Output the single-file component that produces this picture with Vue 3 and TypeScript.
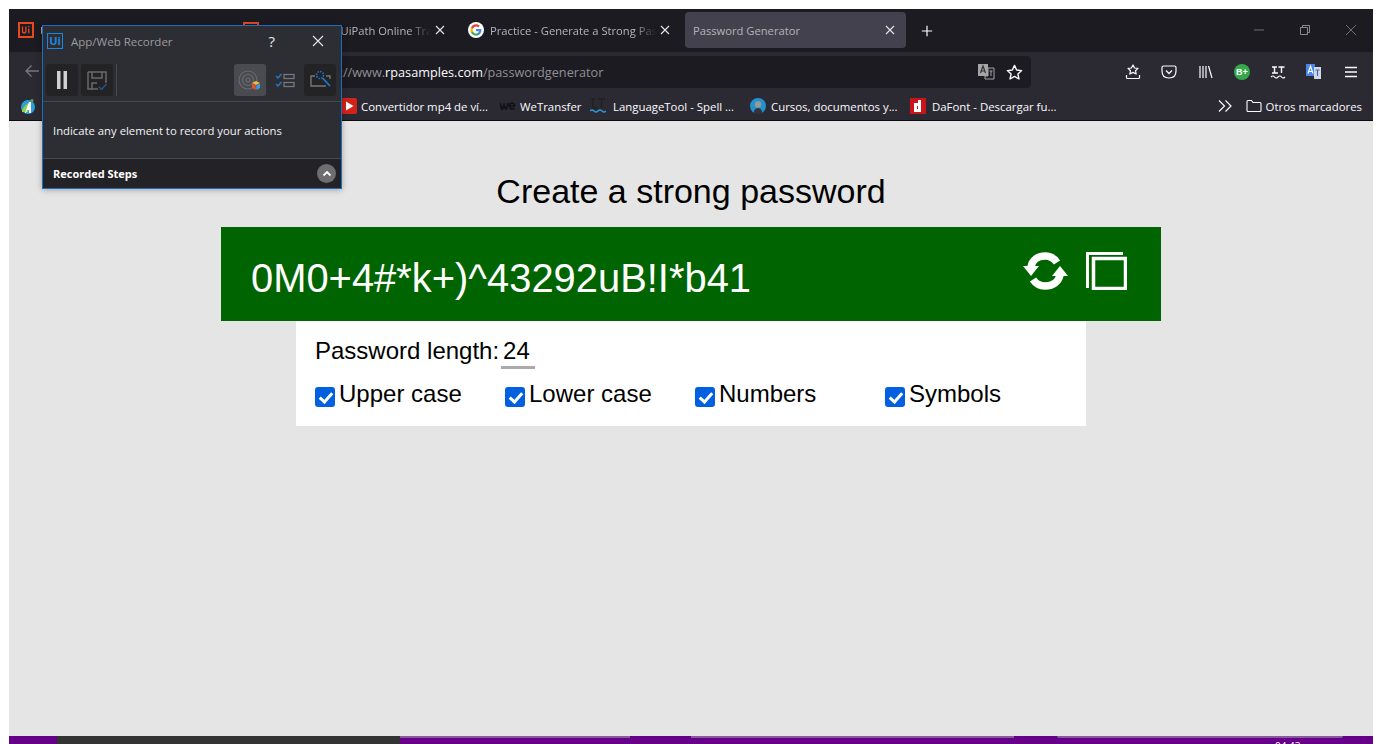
<template>
  <div class="screen">
    <div class="browser">
      <div class="tabbar">
        <div
          v-for="tab in tabs"
          :key="tab.title"
          class="tab"
          :class="{ active: tab.active }"
        >
          <svg v-if="tab.icon === 'ui'" class="tab-icon" viewBox="0 0 16 16">
            <rect x="1" y="1" width="14" height="14" fill="none" stroke="#e8481e" stroke-width="2" />
            <path d="M4.500 4.500v4.500q0 2 1.700 2t1.700-2v-4.500M10.800 6.500v4.800M10.800 4v1.300" fill="none" stroke="#e8481e" stroke-width="1.300" />
          </svg>
          <svg v-else-if="tab.icon === 'g'" class="tab-icon" viewBox="0 0 48 48">
            <circle cx="24" cy="24" r="24" fill="#fff" />
            <path fill="#4285f4" d="M40 24.500c0-1.200-.1-2.300-.3-3.400H24v6.500h9c-.4 2.100-1.600 3.900-3.400 5.100v4.200h5.400c3.200-2.900 5-7.200 5-12.400z" />
            <path fill="#34a853" d="M24 41c4.500 0 8.300-1.500 11-4.100l-5.400-4.200c-1.500 1-3.400 1.600-5.600 1.600-4.300 0-8-2.900-9.300-6.900H9.100v4.300C11.900 37.200 17.500 41 24 41z" />
            <path fill="#fbbc05" d="M14.700 27.400c-.7-2-.7-4.800 0-6.800v-4.300H9.100c-2.800 4.800-2.800 10.600 0 15.400z" />
            <path fill="#ea4335" d="M24 13.700c2.400 0 4.600.8 6.300 2.500l4.800-4.800C32.300 8.700 28.500 7 24 7c-6.500 0-12.100 3.800-14.900 9.300l5.600 4.300c1.300-4 5-6.900 9.300-6.900z" />
          </svg>
          <span class="tab-title">{{ tab.title }}</span>
          <svg class="tab-close" viewBox="0 0 10 10">
            <path d="M1 1l8 8M9 1l-8 8" stroke="#e6e6e8" stroke-width="1.100" />
          </svg>
        </div>
        <svg class="new-tab" viewBox="0 0 14 14">
          <path d="M7 1v12M1 7h12" stroke="#fbfbfe" stroke-width="1.400" />
        </svg>
        <div class="window-controls">
          <svg viewBox="0 0 12 12"><path d="M1 6h10" stroke="#6f6f74" /></svg>
          <svg viewBox="0 0 12 12">
            <path d="M1.500 3.500h7v7h-7zM3.500 3.500v-2h7v7h-2" fill="none" stroke="#8a8a8e" />
          </svg>
          <svg viewBox="0 0 12 12"><path d="M1 1l10 10M11 1l-10 10" stroke="#6f6f74" /></svg>
        </div>
      </div>

      <div class="toolbar">
        <svg class="back" viewBox="0 0 16 16">
          <path d="M15 8H2M7.500 2.500L2 8l5.500 5.500" fill="none" stroke="#77767d" stroke-width="1.300" />
        </svg>
        <div class="urlbar">
          <span class="url">https://www.<b>rpasamples.com</b>/passwordgenerator</span>
          <svg class="url-translate" viewBox="0 0 18 18">
            <rect x="1" y="1" width="10" height="12" fill="#a5a5a8" />
            <path d="M3.500 10l2.500-7 2.500 7M4.300 8h3.400" fill="none" stroke="#333" stroke-width="1.200" />
            <path d="M11 5h6v11H8v-3h3z" fill="none" stroke="#a5a5a8" />
            <path d="M12.500 8h3M14 8v5" stroke="#a5a5a8" />
          </svg>
          <svg class="url-star" viewBox="0 0 16 16">
            <path d="M8 1.300l2 4.400 4.700.5-3.500 3.200 1 4.700L8 11.700l-4.200 2.400 1-4.700L1.300 6.200 6 5.700z" fill="none" stroke="#fbfbfe" stroke-width="1.300" stroke-linejoin="round" />
          </svg>
        </div>
        <div class="tool-icons">
          <svg viewBox="0 0 16 16">
            <path d="M8 1l1.600 3 3.400.4-2.500 2.300.7 3.300L8 8.400 4.800 10l.7-3.300L3 4.400 6.400 4zM1.500 11v2.500q0 1 1 1h11q1 0 1-1V11" fill="none" stroke="#fbfbfe" stroke-width="1.200" stroke-linejoin="round" />
          </svg>
          <svg viewBox="0 0 16 16">
            <path d="M2.500 2h11Q15 2 15 3.500V7q0 7-7 7T1 7V3.500Q1 2 2.500 2z" fill="none" stroke="#fbfbfe" stroke-width="1.200" />
            <path d="M5 6.500l3 3 3-3" fill="none" stroke="#fbfbfe" stroke-width="1.300" />
          </svg>
          <svg viewBox="0 0 16 16">
            <path d="M2 2v12M5 2v12M8 2v12M10.500 2l3.500 12" fill="none" stroke="#fbfbfe" stroke-width="1.200" />
          </svg>
          <svg viewBox="0 0 16 16">
            <circle cx="8" cy="8" r="8" fill="#34a84a" />
            <text x="8" y="11.200" class="badge-text" text-anchor="middle">B+</text>
          </svg>
          <svg viewBox="0 0 16 16">
            <path d="M2 3h5M4.500 3v6M2 9h6M8.500 3h6M11.500 3v6" fill="none" stroke="#fbfbfe" stroke-width="1.400" />
            <path d="M1 13q2-2 3.500 0t3.500 0 3.500 0 3.500 0" fill="none" stroke="#fbfbfe" stroke-width="1.200" />
          </svg>
          <svg viewBox="0 0 16 16">
            <rect x="0" y="0" width="9" height="12" fill="#4a86e8" />
            <path d="M2 9.500L4.500 2 7 9.500M3 7.500h3" fill="none" stroke="#fff" stroke-width="1.100" />
            <rect x="8" y="3" width="7" height="12" fill="#cfd8e6" />
            <path d="M9.500 6h4M11.500 6v6" stroke="#3a66b0" stroke-width="1.100" />
          </svg>
          <svg viewBox="0 0 16 16">
            <path d="M2 3.500h12M2 8h12M2 12.500h12" stroke="#fbfbfe" stroke-width="1.300" />
          </svg>
        </div>
      </div>

      <div class="bookmarks">
        <svg class="bm-first" viewBox="0 0 16 16">
          <circle cx="8" cy="9" r="7" fill="#2a9fd8" />
          <path d="M2 12q3-6 8-7l-2 9H2z" fill="#8fd14f" />
          <path d="M5 15L9 4h2v11H9v-3H7l-1 3z" fill="#fff" />
          <circle cx="12" cy="2.500" r="1.500" fill="#5aa83c" />
        </svg>
        <div
          v-for="mark in bookmarks"
          :key="mark.title"
          class="bookmark"
          :style="{ width: mark.width + 'px', gap: mark.gap + 'px' }"
        >
          <svg v-if="mark.icon === 'yt'" viewBox="0 0 16 16">
            <rect width="16" height="16" rx="2" fill="#d3221a" />
            <path d="M5 3.500l7.500 4.500L5 12.500z" fill="#fff" />
          </svg>
          <svg v-else-if="mark.icon === 'we'" viewBox="0 0 16 16">
            <path d="M0 5l1.500 6h1L4 7l1.500 4h1L8 5M9.500 8h5q0-3-2.500-3T9.500 8q0 3 2.500 3 1.500 0 2.500-1" fill="none" stroke="#111114" stroke-width="1.700" />
          </svg>
          <svg v-else-if="mark.icon === 'lt'" viewBox="0 0 16 16">
            <path d="M1 1h4M3 1v9H7M8 1h7M11.500 1v9" fill="none" stroke="#202024" stroke-width="1.500" />
            <path d="M0 13q2-2 4 0t4 0 4 0 4 0" fill="none" stroke="#2b9ad6" stroke-width="1.400" />
          </svg>
          <svg v-else-if="mark.icon === 'av'" viewBox="0 0 16 16">
            <circle cx="8" cy="8" r="8" fill="#2292d0" />
            <circle cx="8" cy="6.500" r="3.200" fill="#9a9a92" />
            <path d="M3.500 16q.5-6 4.500-6t4.500 6z" fill="#30333a" />
          </svg>
          <svg v-else viewBox="0 0 16 16">
            <rect width="16" height="16" fill="#c8141a" />
            <path d="M4 5h4V2h3v12H4zM7 8v3h1V8z" fill="#fff" />
          </svg>
          <span>{{ mark.title }}</span>
        </div>
        <div class="bm-right">
          <svg class="chevrons" viewBox="0 0 14 12">
            <path d="M1 .5l5.500 5.500L1 11.500M7.500 .5L13 6l-5.500 5.500" fill="none" stroke="#fbfbfe" stroke-width="1.200" />
          </svg>
          <div class="bookmark other">
            <svg viewBox="0 0 16 16">
              <path d="M1 3.500q0-1 1-1h3.500l1.500 2h7q1 0 1 1v7q0 1-1 1H2q-1 0-1-1z" fill="none" stroke="#fbfbfe" stroke-width="1.100" />
            </svg>
            <span>Otros marcadores</span>
          </div>
        </div>
      </div>

      <main class="page">
        <h1>Create a strong password</h1>
        <section class="result">
          <span class="password">{{ password }}</span>
          <div class="result-actions">
            <svg class="sync" viewBox="0 0 44 38">
              <path d="M8 15C9 8 15 4 22 4c5 0 9 2 12 6.500" fill="none" stroke="#fff" stroke-width="7.500" />
              <path d="M0 14h16l-8 10z" fill="#fff" />
              <path d="M37 23C35.500 30 29.500 34 22 34c-5 0-9-2-12-6.500" fill="none" stroke="#fff" stroke-width="7.500" />
              <path d="M45 24H29l8-10z" fill="#fff" />
            </svg>
            <svg class="copy" viewBox="0 0 41 38">
              <path d="M37 1.500H1.500V36" fill="none" stroke="#fff" stroke-width="3" />
              <rect x="7.500" y="6.500" width="32" height="30" fill="none" stroke="#fff" stroke-width="3.500" />
            </svg>
          </div>
        </section>
        <section class="settings">
          <div class="length-row">
            <label for="length">Password length:</label>
            <input id="length" v-model="length" class="length-input" type="text" />
          </div>
          <div class="options">
            <label v-for="opt in options" :key="opt.label" class="option">
              <input v-model="opt.checked" type="checkbox" />
              <span>{{ opt.label }}</span>
            </label>
          </div>
        </section>
      </main>
    </div>

    <div class="taskbar">
      <div class="task-dark"></div>
      <div class="task-strip s1"></div>
      <div class="task-strip s2"></div>
      <div class="task-strip s3"></div>
      <span class="clock">04:43</span>
    </div>

    <aside class="recorder">
      <header class="rec-title">
        <span class="rec-logo">Ui</span>
        <span class="rec-name">App/Web Recorder</span>
        <span class="rec-help">?</span>
        <svg class="rec-close" viewBox="0 0 12 12">
          <path d="M1 1l10 10M11 1l-10 10" stroke="#e6e6e8" stroke-width="1.100" />
        </svg>
      </header>
      <div class="rec-tools">
        <button class="rec-btn">
          <svg viewBox="0 0 32 32">
            <rect x="11" y="7" width="3.500" height="18" fill="#d0d0d0" />
            <rect x="17.500" y="7" width="3.500" height="18" fill="#d0d0d0" />
          </svg>
        </button>
        <button class="rec-btn">
          <svg viewBox="0 0 32 32">
            <path d="M7 8h18v11M7 8v17h10" fill="none" stroke="#6a6a6a" stroke-width="1.500" />
            <path d="M11 8v6h10V8M11 25v-6h5" fill="none" stroke="#6a6a6a" stroke-width="1.500" />
            <path d="M18 23l2.500 2.500L25.500 20" fill="none" stroke="#24558c" stroke-width="1.500" />
          </svg>
        </button>
        <span class="rec-sep"></span>
        <button class="rec-btn on">
          <svg viewBox="0 0 32 32">
            <circle cx="14" cy="16" r="9" fill="none" stroke="#6a6a6d" stroke-width="1.200" />
            <circle cx="14" cy="16" r="5.500" fill="none" stroke="#6a6a6d" stroke-width="1.200" />
            <circle cx="14" cy="16" r="2" fill="none" stroke="#6a6a6d" stroke-width="1.200" />
            <path d="M18 19l4-2 4 2-4 2z" fill="#f0b93a" />
            <path d="M18 19.500l3.700 2V26L18 24z" fill="#e2522e" />
            <path d="M26 19.500l-3.700 2V26l3.700-2z" fill="#3f9ae0" />
          </svg>
        </button>
        <button class="rec-btn flat">
          <svg viewBox="0 0 32 32">
            <path d="M7 12l2 2 3.500-4M7 20l2 2 3.500-4" fill="none" stroke="#1f78d1" stroke-width="1.500" />
            <rect x="15" y="10.500" width="10" height="4" fill="none" stroke="#77777a" stroke-width="1.300" />
            <rect x="15" y="18.500" width="10" height="4" fill="none" stroke="#77777a" stroke-width="1.300" />
          </svg>
        </button>
        <button class="rec-btn">
          <svg viewBox="0 0 32 32">
            <path d="M11 12H7v10h15M22 12h4v3" fill="none" stroke="#77777a" stroke-width="1.400" />
            <circle cx="16" cy="11" r="3.500" fill="none" stroke="#1f78d1" stroke-width="1.500" stroke-dasharray="1.500 1.200" />
            <path d="M18.500 14l7.500 8" stroke="#1f78d1" stroke-width="1.800" />
          </svg>
        </button>
      </div>
      <p class="rec-hint">Indicate any element to record your actions</p>
      <footer class="rec-footer">
        <span>Recorded Steps</span>
        <span class="rec-toggle">
          <svg viewBox="0 0 10 8"><path d="M1.500 5.500L5 2l3.500 3.500" fill="none" stroke="#fff" stroke-width="1.800" /></svg>
        </span>
      </footer>
    </aside>
  </div>
</template>

<script setup lang="ts">
import { reactive, ref } from 'vue'

const password = ref('0M0+4#*k+)^43292uB!I*b41')
const length = ref('24')

const tabs = [
  { title: 'UiPath Academy', icon: 'ui', active: false },
  { title: 'Mi Academy | UiPath Online Training', icon: 'ui', active: false },
  { title: 'Practice - Generate a Strong Password', icon: 'g', active: false },
  { title: 'Password Generator', icon: '', active: true }
]

const bookmarks = [
  { title: 'Convertidor mp4 de ví...', icon: 'yt', width: 159, gap: 4 },
  { title: 'WeTransfer', icon: 'we', width: 90, gap: 4 },
  { title: 'LanguageTool - Spell ...', icon: 'lt', width: 160, gap: 7 },
  { title: 'Cursos, documentos y...', icon: 'av', width: 160, gap: 5 },
  { title: 'DaFont - Descargar fu...', icon: 'df', width: 150, gap: 6 }
]

const options = reactive([
  { label: 'Upper case', checked: true },
  { label: 'Lower case', checked: true },
  { label: 'Numbers', checked: true },
  { label: 'Symbols', checked: true }
])
</script>

<style>
html,
body {
  margin: 0;
  background: #fff;
}
</style>

<style scoped>
.screen {
  position: relative;
  width: 1382px;
  height: 744px;
  padding: 9px 9px 0;
  box-sizing: border-box;
  overflow: hidden;
  display: flex;
  flex-direction: column;
  font-family: "Open Sans", "Noto Sans", sans-serif;
}

.browser {
  flex: 1;
  min-height: 0;
  display: flex;
  flex-direction: column;
}

.tabbar {
  height: 43px;
  flex-shrink: 0;
  background: #1c1b22;
  display: flex;
  align-items: center;
  gap: 4px;
  padding-left: 1px;
  box-sizing: border-box;
}

.tab {
  width: 221px;
  height: 36px;
  margin-top: -1px;
  padding: 0 8px;
  box-sizing: border-box;
  border-radius: 4px;
  display: flex;
  align-items: center;
  color: #b4b4b8;
  font-size: 11.200px;
}

.tab.active {
  background: #42414d;
}

.tab-icon {
  width: 16px;
  height: 16px;
  margin-right: 6px;
  flex-shrink: 0;
}

.tab-title {
  flex: 1;
  min-width: 0;
  overflow: hidden;
  white-space: nowrap;
  -webkit-mask-image: linear-gradient(to left, transparent, #000 22px);
  mask-image: linear-gradient(to left, transparent, #000 22px);
}

.tab.active .tab-title {
  -webkit-mask-image: none;
  mask-image: none;
}

.tab-close {
  width: 10px;
  height: 10px;
  flex-shrink: 0;
  margin-left: 4px;
  margin-right: 3px;
}

.new-tab {
  width: 12px;
  height: 12px;
  margin-left: 11px;
}

.window-controls {
  margin-left: auto;
  display: flex;
  gap: 34px;
  padding-right: 16px;
  margin-top: -2px;
}

.window-controls svg {
  width: 12px;
  height: 12px;
}

.toolbar {
  height: 37px;
  flex-shrink: 0;
  background: #2b2a33;
  display: flex;
  align-items: center;
  box-sizing: border-box;
  padding-left: 15px;
}

.back {
  width: 16px;
  height: 16px;
  flex-shrink: 0;
}

.urlbar {
  width: 975px;
  height: 32px;
  margin-left: 16px;
  margin-top: 3px;
  background: #1c1b22;
  border-radius: 4px;
  display: flex;
  align-items: center;
  padding: 0 8px 0 0;
  box-sizing: border-box;
  font-size: 12.700px;
  color: #8f8f94;
}

.url {
  flex: 1;
  padding-left: 253px;
}

.url b {
  font-weight: 400;
  color: #fbfbfe;
}

.url-translate {
  width: 18px;
  height: 18px;
  margin-right: 11px;
}

.url-star {
  width: 17px;
  height: 17px;
}

.tool-icons {
  display: flex;
  align-items: center;
  gap: 20.300px;
  margin-left: 94px;
  margin-top: 3px;
}

.tool-icons svg {
  width: 16px;
  height: 16px;
  display: block;
}

.badge-text {
  font-family: "Liberation Sans", sans-serif;
  font-size: 9px;
  font-weight: 700;
  fill: #fff;
}

.bookmarks {
  height: 32px;
  flex-shrink: 0;
  background: #2b2a33;
  border-bottom: 1px solid #0c0c0f;
  box-sizing: border-box;
  display: flex;
  align-items: center;
  padding: 3px 11px 0;
  font-size: 11.400px;
  color: #fbfbfe;
}

.bm-first {
  width: 16px;
  height: 16px;
  margin-right: 305px;
}

.bookmark {
  display: flex;
  align-items: center;
  white-space: nowrap;
  flex-shrink: 0;
}

.bookmark svg {
  width: 16px;
  height: 16px;
  flex-shrink: 0;
}

.bm-right {
  margin-left: auto;
  display: flex;
  align-items: center;
  gap: 14px;
}

.chevrons {
  width: 14px;
  height: 12px;
}

.other {
  gap: 4px;
}

.page {
  flex: 1;
  min-height: 0;
  background: #e5e5e5;
  display: flex;
  flex-direction: column;
  align-items: center;
  font-family: "Liberation Sans", Arial, sans-serif;
  color: #000;
}

h1 {
  margin: 50px 0 15px;
  font-size: 34px;
  line-height: 41px;
  font-weight: 400;
}

.result {
  width: 940px;
  height: 94px;
  background: #006400;
  color: #fff;
  box-sizing: border-box;
  padding: 0 34px 0 30px;
  display: flex;
  align-items: center;
  justify-content: space-between;
}

.password {
  font-size: 39.900px;
  line-height: 46px;
  margin-top: 7px;
}

.result-actions {
  display: flex;
  align-items: center;
  gap: 19px;
  margin-top: -6px;
}

.sync {
  width: 44px;
  height: 38px;
  overflow: visible;
}

.copy {
  width: 41px;
  height: 38px;
}

.settings {
  width: 790px;
  height: 105px;
  background: #fff;
  box-sizing: border-box;
  padding: 14px 19px 0;
  font-size: 24px;
}

.length-row {
  display: flex;
  align-items: flex-start;
  height: 36px;
}

.length-row label {
  line-height: 32px;
}

.length-input {
  width: 34px;
  height: 34px;
  margin-left: 2px;
  padding: 0 2px;
  box-sizing: border-box;
  border: 0;
  border-bottom: 3px solid #aaa;
  background: transparent;
  outline: none;
  font: inherit;
  color: #000;
  line-height: 31px;
}

.options {
  display: grid;
  grid-template-columns: repeat(4, 190px);
  margin-top: 9px;
}

.option {
  display: flex;
  align-items: flex-start;
  gap: 4px;
  line-height: 28px;
}

.option input {
  appearance: none;
  -webkit-appearance: none;
  position: relative;
  width: 20px;
  height: 20px;
  margin: 7px 0 0;
  background: #0060df;
  border-radius: 3px;
  flex-shrink: 0;
}

.option input:checked::after {
  content: "";
  position: absolute;
  left: 7px;
  top: 3px;
  width: 5px;
  height: 10px;
  border: solid #fff;
  border-width: 0 3px 3px 0;
  transform: rotate(42deg);
}

.taskbar {
  position: relative;
  height: 8px;
  flex-shrink: 0;
  background: #660088;
}

.task-dark {
  position: absolute;
  left: 48px;
  top: 0;
  width: 343px;
  height: 8px;
  background: #333;
}

.task-strip {
  position: absolute;
  top: 0;
  height: 2px;
  background: #8a5a9e;
}

.s1 {
  left: 391px;
  width: 230px;
}

.s2 {
  left: 682px;
  width: 323px;
}

.s3 {
  left: 1048px;
  width: 286px;
  border-radius: 0 0 4px 4px;
}

.clock {
  position: absolute;
  left: 1266px;
  top: 4px;
  font-size: 10px;
  line-height: 12px;
  color: #fff;
}

.recorder {
  position: absolute;
  left: 42px;
  top: 25px;
  width: 300px;
  height: 164px;
  box-sizing: border-box;
  border: 1px solid #1c6ec4;
  background: #2d2e33;
  display: flex;
  flex-direction: column;
  font-size: 11.300px;
  color: #fff;
  box-shadow: 0 1px 6px rgba(0, 0, 0, 0.3);
}

.rec-title {
  height: 38px;
  display: flex;
  align-items: center;
  padding: 0 0 8px 4px;
  box-sizing: border-box;
  flex-shrink: 0;
}

.rec-logo {
  width: 16px;
  height: 16px;
  box-sizing: border-box;
  border: 1.500px solid #1c86e0;
  color: #1c86e0;
  font-size: 11px;
  font-weight: 700;
  line-height: 13px;
  text-align: center;
}

.rec-name {
  margin-left: 8px;
  font-size: 11.500px;
  color: #9c9c9e;
}

.rec-help {
  margin-left: auto;
  margin-right: 1px;
  font-size: 15px;
  color: #e8e8e8;
}

.rec-close {
  width: 12px;
  height: 12px;
  margin-left: 36px;
  margin-right: 17px;
}

.rec-tools {
  height: 38px;
  flex-shrink: 0;
  box-sizing: border-box;
  padding: 0 5px 0 3px;
  display: flex;
  align-items: flex-start;
  gap: 3px;
  border-bottom: 1px solid #47484c;
}

.rec-btn {
  width: 32px;
  height: 32px;
  border: 0;
  padding: 0;
  border-radius: 3px;
  background: #232326;
  flex-shrink: 0;
}

.rec-btn svg {
  display: block;
  width: 32px;
  height: 32px;
}

.rec-btn.on {
  background: #4a4b50;
  margin-left: auto;
}

.rec-btn.flat {
  background: transparent;
}

.rec-sep {
  width: 1px;
  height: 32px;
  background: #47484c;
}

.rec-hint {
  flex: 1;
  margin: 0;
  padding: 1px 0 0 10px;
  display: flex;
  align-items: center;
  color: #f4f4f4;
}

.rec-footer {
  height: 30px;
  flex-shrink: 0;
  background: #232327;
  border-top: 1px solid #47484c;
  box-sizing: border-box;
  display: flex;
  align-items: center;
  justify-content: space-between;
  padding: 0 5px 0 10px;
  font-size: 11px;
  font-weight: 700;
}

.rec-toggle {
  width: 19px;
  height: 19px;
  border-radius: 50%;
  background: #6e6e70;
  display: flex;
  align-items: center;
  justify-content: center;
}

.rec-toggle svg {
  width: 10px;
  height: 8px;
}
</style>
